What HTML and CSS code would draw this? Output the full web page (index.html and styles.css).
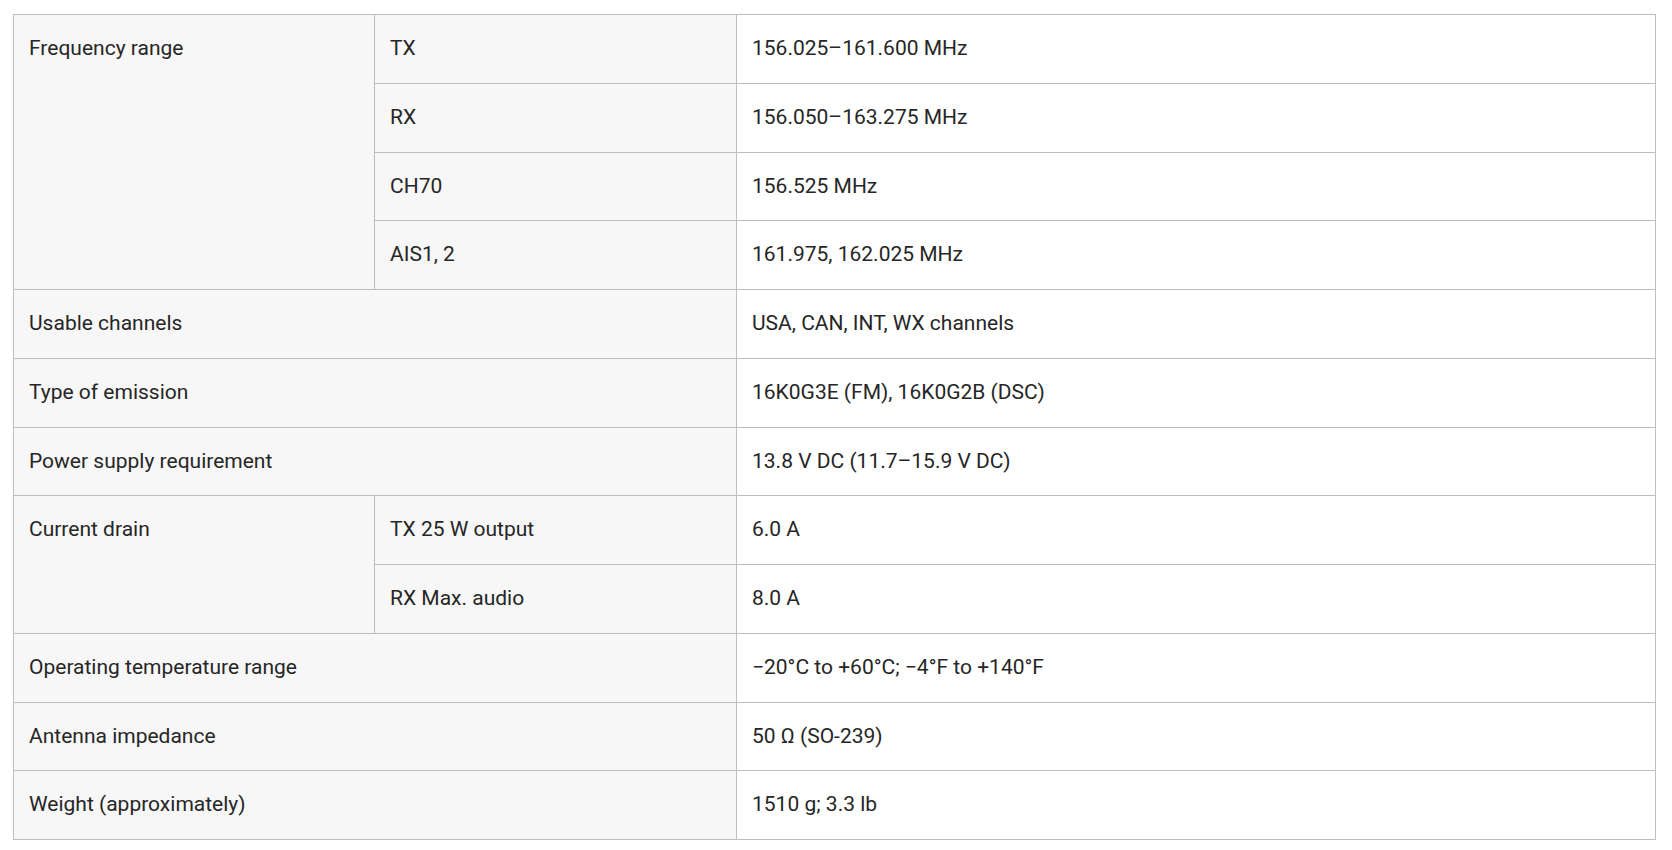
FILE: index.html
```html
<!DOCTYPE html>
<html lang="en">
<head>
<meta charset="utf-8">
<title>Specifications</title>
<link rel="stylesheet" href="styles.css">
</head>
<body>
<div class="wrap">
<table class="spec">
  <colgroup>
    <col class="c1">
    <col class="c2">
    <col class="c3">
  </colgroup>
  <tbody>
    <tr><th rowspan="4">Frequency range</th><th>TX</th><td>156.025–161.600 MHz</td></tr>
    <tr><th>RX</th><td>156.050–163.275 MHz</td></tr>
    <tr><th>CH70</th><td>156.525 MHz</td></tr>
    <tr><th>AIS1, 2</th><td>161.975, 162.025 MHz</td></tr>
    <tr><th colspan="2">Usable channels</th><td>USA, CAN, INT, WX channels</td></tr>
    <tr><th colspan="2">Type of emission</th><td>16K0G3E (FM), 16K0G2B (DSC)</td></tr>
    <tr><th colspan="2">Power supply requirement</th><td>13.8 V DC (11.7–15.9 V DC)</td></tr>
    <tr><th rowspan="2">Current drain</th><th>TX 25 W output</th><td>6.0 A</td></tr>
    <tr><th>RX Max. audio</th><td>8.0 A</td></tr>
    <tr><th colspan="2">Operating temperature range</th><td>−20°C to +60°C; −4°F to +140°F</td></tr>
    <tr><th colspan="2">Antenna impedance</th><td>50 Ω (SO-239)</td></tr>
    <tr><th colspan="2">Weight (approximately)</th><td>1510 g; 3.3 lb</td></tr>
  </tbody>
</table>
</div>
</body>
</html>
```
FILE: styles.css
```css
html, body {
  margin: 0;
  padding: 0;
  background: #ffffff;
}
.wrap {
  padding: 14px 16px 0 13px;
}
.spec {
  width: 100%;
  border-collapse: collapse;
  table-layout: fixed;
  font-family: Roboto, "Liberation Sans", sans-serif;
  font-size: 21px;
  line-height: 27.75px;
  color: #262626;
}
.c1 { width: 361px; }
.c2 { width: 362px; }
.spec th,
.spec td {
  border: 1px solid #bdbdbd;
  padding: 20px 15px;
  text-align: left;
  vertical-align: top;
  font-weight: 400;
}
.spec th {
  background: #f7f7f7;
}
.spec td {
  background: #ffffff;
}
```
